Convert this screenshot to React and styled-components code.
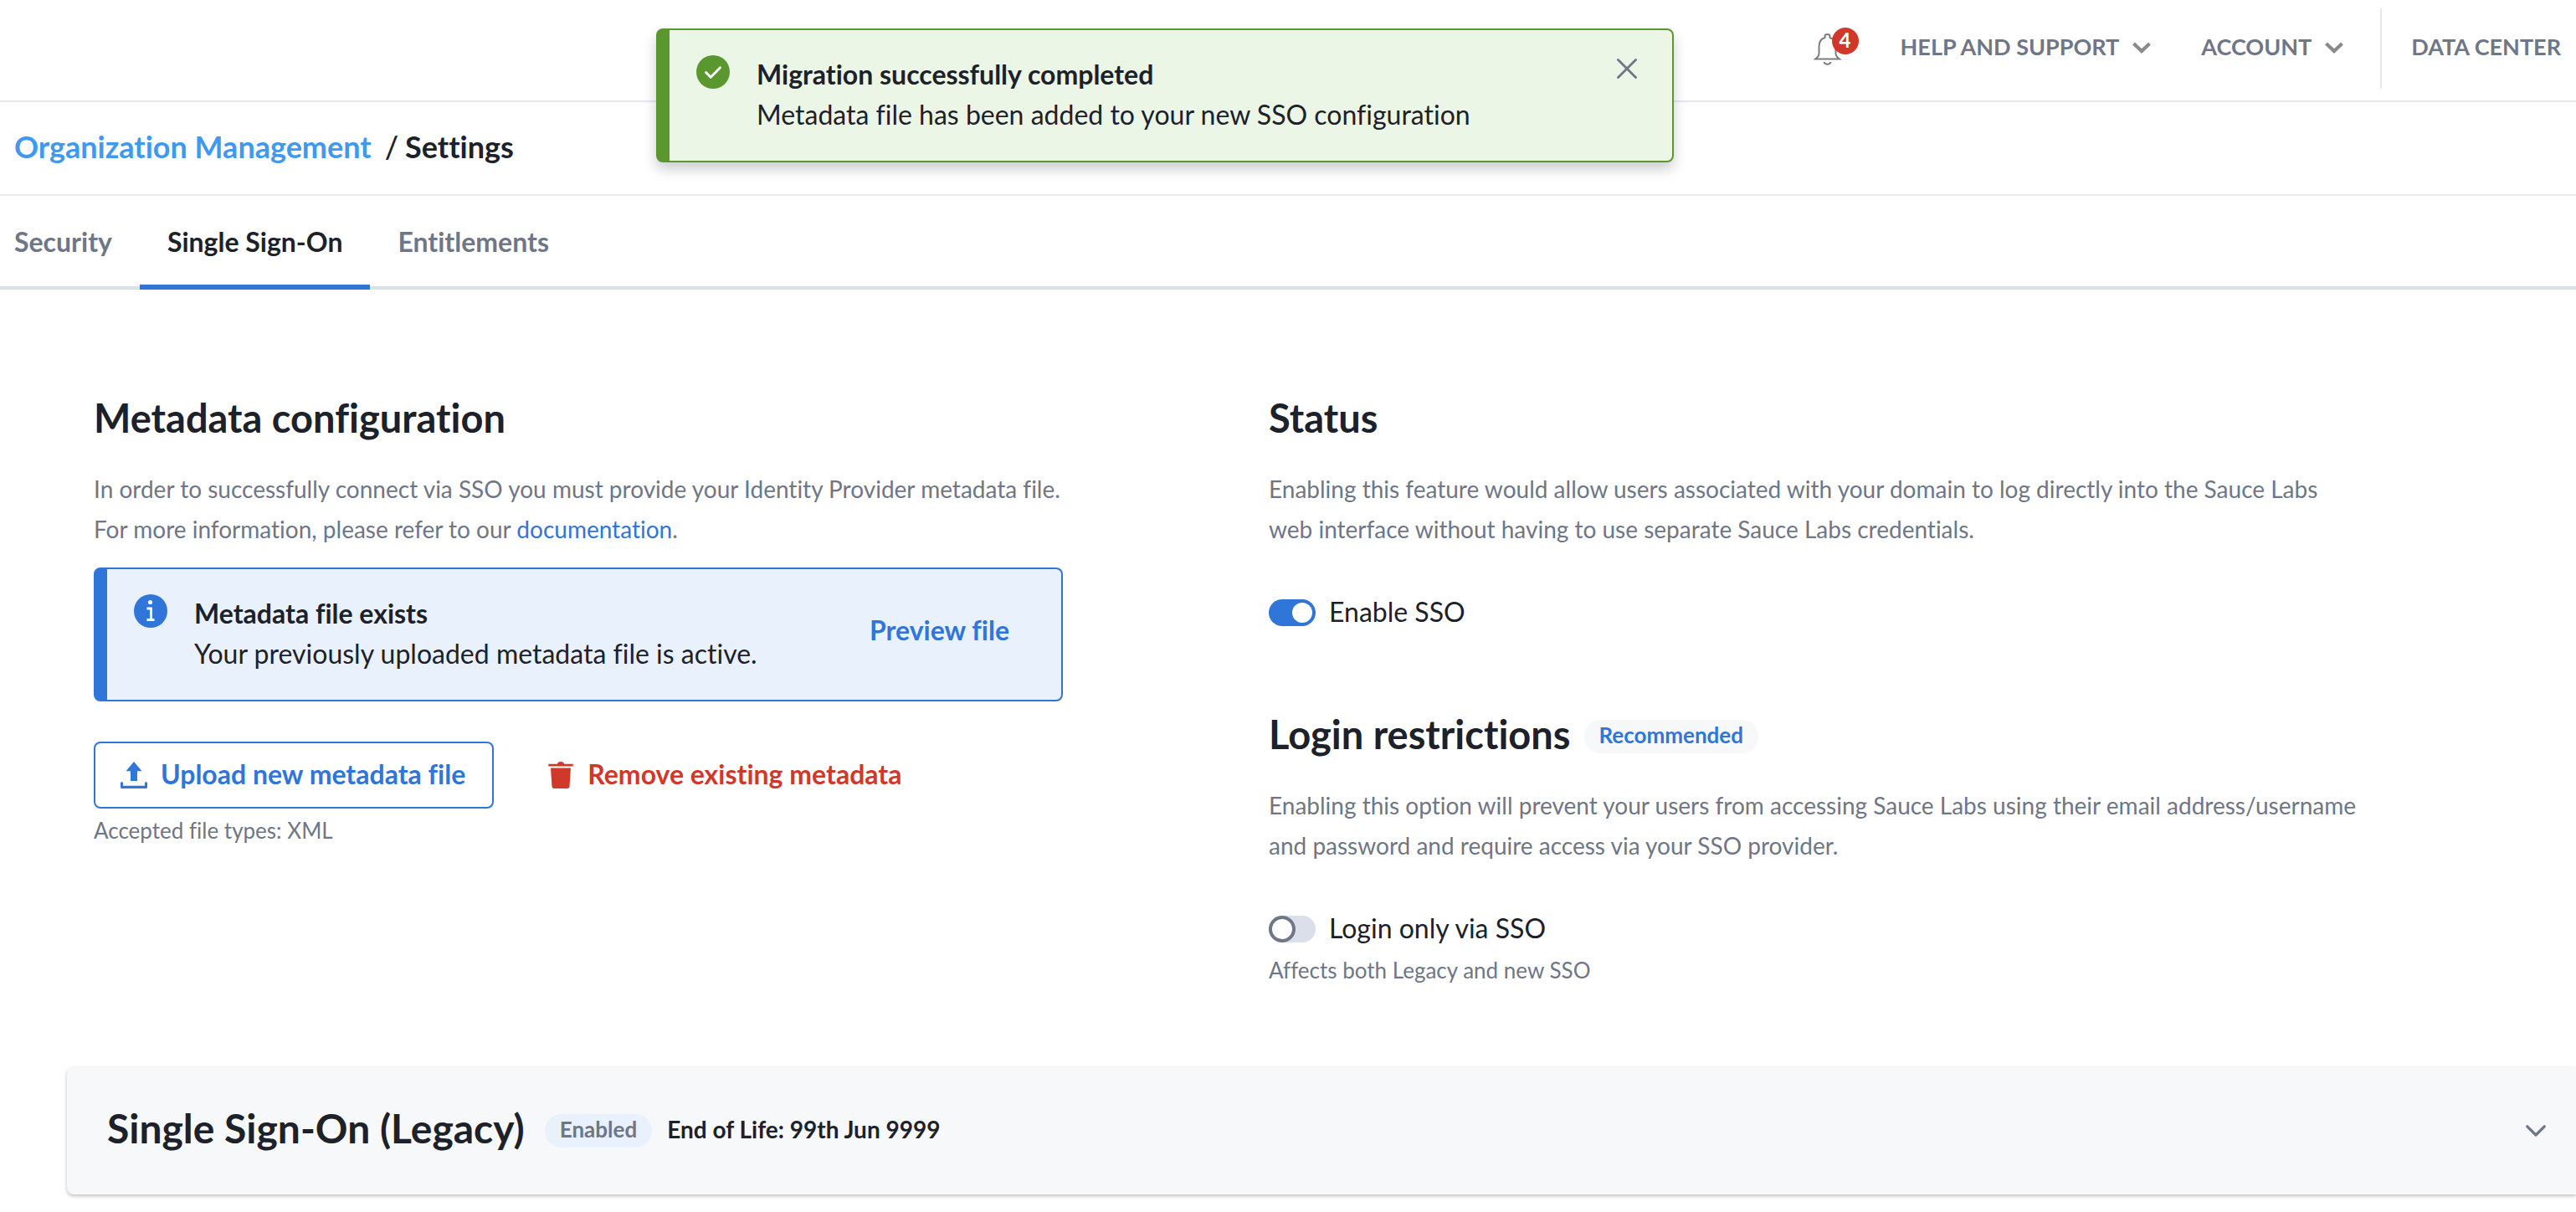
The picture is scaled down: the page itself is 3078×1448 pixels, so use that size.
import React, { useState } from 'react';
import styled, { createGlobalStyle, css } from 'styled-components';

const color = {
  ink: '#1d2129',
  muted: '#6f7685',
  blue: '#3075d8',
  blueSoft: '#e9f1fd',
  link: '#4099ec',
  green: '#5a982f',
  greenSoft: '#ebf6e6',
  red: '#d0382a',
  panel: '#f7f8fa',
  track: '#dbdfe9',
};

const Global = createGlobalStyle`
  *, *::before, *::after { box-sizing: border-box; }
  body {
    margin: 0;
    background: #fff;
    color: ${color.ink};
    font-family: Lato, "Liberation Sans", sans-serif;
    font-size: 32px;
    font-variant-ligatures: none;
    line-height: 48px;
  }
`;

const resetButton = css`
  margin: 0;
  padding: 0;
  border: 0;
  background: none;
  font: inherit;
  font-variant-ligatures: none;
  color: inherit;
  cursor: pointer;
`;

const Icon = styled.svg`
  display: block;
  flex: none;
`;

/* ---------- top bar ---------- */

const TopBar = styled.header`
  display: flex;
  justify-content: flex-end;
  align-items: center;
  padding: 10px 18px 14px 0;
  border-bottom: 2px solid #e5e9ee;
`;

const BellButton = styled.button`
  ${resetButton}
  position: relative;
  padding: 2px 20px 0 0;
  margin-right: 50px;
  color: #7d7d7d;
`;

const Count = styled.span`
  position: absolute;
  top: -4px;
  right: 0;
  width: 32px;
  height: 32px;
  border-radius: 50%;
  background: ${color.red};
  color: #fff;
  font-size: 24px;
  font-weight: 700;
  line-height: 30px;
  text-align: center;
`;

const TopItem = styled.button`
  ${resetButton}
  display: flex;
  align-items: center;
  gap: 16px;
  padding-bottom: 4px;
  margin-right: ${(p) => p.$gap}px;
  font-size: 27px;
  font-weight: 700;
  color: ${color.muted};

  svg {
    margin-top: 2px;
    color: #8a8a8a;
  }
`;

const TopDivider = styled.span`
  width: 2px;
  height: 96px;
  margin-right: 35px;
  background: #e8e8ea;
`;

/* ---------- breadcrumb and tabs ---------- */

const Breadcrumb = styled.nav`
  display: flex;
  gap: 8px;
  padding: 31px 17px 35px;
  border-bottom: 2px solid #ebebeb;
  font-size: 36px;
  font-weight: 700;
  line-height: 44px;

  a {
    margin-right: 8px;
    color: ${color.link};
    text-decoration: none;
  }
`;

const Slash = styled.span`
  font-weight: 500;
`;

const Tabs = styled.nav`
  display: flex;
  box-shadow: inset 0 -4px 0 #dbe0e8;
`;

const Tab = styled.button`
  ${resetButton}
  padding: 31px 33px 27px;
  border-bottom: 6px solid ${(p) => (p.$active ? color.blue : 'transparent')};
  font-weight: 700;
  color: ${(p) => (p.$active ? color.ink : color.muted)};

  &:first-child {
    padding-left: 17px;
  }
`;

/* ---------- alerts ---------- */

const AlertBox = styled.div`
  display: flex;
  gap: 32px;
  padding: 29px 42px 31px 32px;
  border: 2px solid ${(p) => p.$tone};
  border-left-width: 16px;
  border-radius: 8px;
  background: ${(p) => p.$fill};
`;

const Toast = styled(AlertBox)`
  position: absolute;
  top: 34px;
  left: 784px;
  width: 1216px;
  box-shadow: 0 8px 16px rgba(0, 0, 0, 0.2);
`;

const InlineAlert = styled(AlertBox)`
  max-width: 1158px;
  margin-top: 22px;
  padding-right: 62px;
`;

const AlertIcon = styled(Icon)`
  margin-top: 1px;
`;

const AlertText = styled.div`
  flex: 1;
`;

const AlertTitle = styled.div`
  font-weight: 700;
`;

const CloseButton = styled.button`
  ${resetButton}
  align-self: flex-start;
  padding-top: 5px;
  color: ${color.muted};
`;

const TextButton = styled.button`
  ${resetButton}
  padding-bottom: 8px;
  font-weight: 700;
  color: ${color.blue};
`;

/* ---------- settings ---------- */

const Settings = styled.main`
  display: grid;
  grid-template-columns: 1fr 1fr;
  padding: 123px 158px 96px 112px;
`;

const Section = styled.section`
  & + & {
    margin-top: 92px;
  }
`;

const HeadingRow = styled.div`
  display: flex;
  align-items: center;
  gap: 16px;
  margin-bottom: 31px;
`;

const Heading = styled.h2`
  margin: 0;
  font-size: 47px;
  font-weight: 700;
  line-height: 60px;
`;

const Copy = styled.p`
  max-width: 1312px;
  margin: 0;
  font-size: 28px;
  color: ${color.muted};

  a {
    color: ${color.blue};
    text-decoration: none;
  }
`;

const Hint = styled.p`
  margin: 6px 0 0;
  font-size: 26px;
  line-height: 40px;
  color: ${color.muted};
`;

const Pill = styled.span`
  padding: 0 18px 4px;
  border-radius: 20px;
  background: ${(p) => p.$fill};
  color: ${(p) => p.$ink};
  font-size: 26px;
  font-weight: 700;
  line-height: 36px;

  ${Heading} + & {
    margin-top: 6px;
  }
`;

const Actions = styled.div`
  display: flex;
  gap: 32px;
  margin-top: 48px;
`;

const ActionButton = styled.button`
  ${resetButton}
  display: flex;
  align-items: center;
  gap: 16px;
  height: 80px;
  padding: 0 32px 0 30px;
  border: 2px solid ${(p) => (p.$outlined ? p.$tone : 'transparent')};
  border-radius: 8px;
  font-weight: 700;
  color: ${(p) => p.$tone};

  span {
    padding-bottom: 2px;
  }
`;

const SwitchLabel = styled.label`
  display: flex;
  gap: 16px;
  margin-top: 51px;
  cursor: pointer;
`;

const Switch = styled.input`
  appearance: none;
  display: flex;
  flex: none;
  width: 56px;
  height: 32px;
  margin: 9px 0 0;
  border-radius: 16px;
  background: ${color.track};

  &::before {
    content: '';
    width: 32px;
    height: 32px;
    border: 4px solid ${color.muted};
    border-radius: 50%;
    background: #fff;
  }

  &:checked {
    justify-content: flex-end;
    align-items: center;
    padding-right: 4px;
    background: ${color.blue};
  }

  &:checked::before {
    width: 24px;
    height: 24px;
    border: 0;
  }
`;

/* ---------- legacy panel ---------- */

const LegacyArea = styled.section`
  padding: 0 0 22px 80px;
`;

const LegacyPanel = styled.button`
  ${resetButton}
  display: flex;
  align-items: center;
  width: 100%;
  height: 152px;
  padding: 0 36px 0 48px;
  border-radius: 8px 0 0 8px;
  background: ${color.panel};
  box-shadow: 0 2px 4px rgba(0, 0, 0, 0.25);
  text-align: left;
`;

const LegacyTitle = styled.span`
  padding-bottom: 6px;
  margin-right: 24px;
  font-size: 48px;
  font-weight: 700;
  line-height: 60px;
`;

const EndOfLife = styled.span`
  flex: 1;
  padding-bottom: 4px;
  margin-left: 18px;
  font-size: 28px;
  font-weight: 700;
`;

const PanelChevron = styled(Icon)`
  color: ${color.muted};
`;

/* ---------- drawings ---------- */

const Bell = () => (
  <Icon width="34" height="40" viewBox="0 0 34 40" fill="none" stroke="currentColor" strokeWidth="2">
    <path d="M2 31.5 C5.500 29 6.500 27.500 6.500 25 V17 C6.500 10.500 9.500 7 13.500 6 V4 C13.500 1.300 19.500 1.300 19.500 4 V6 C23.500 7 26.500 10.500 26.500 17 V25 C26.500 27.500 27.500 29 31 31.500 Z" />
    <path d="M12.500 35 C13.500 38.500 19.500 38.500 20.500 35" />
  </Icon>
);

const SmallChevron = () => (
  <Icon width="22" height="14" viewBox="0 0 22 14" fill="none" stroke="currentColor" strokeWidth="4.200">
    <path d="M1.500 2 L11 11 L20.500 2" />
  </Icon>
);

const CheckCircle = () => (
  <AlertIcon width="40" height="40" viewBox="0 0 40 40">
    <circle cx="20" cy="20" r="20" fill={color.green} />
    <path d="M11.500 20.500 L17.200 26.200 L28.500 14.800" fill="none" stroke="#fff" strokeWidth="3" strokeLinecap="round" strokeLinejoin="round" />
  </AlertIcon>
);

const InfoCircle = () => (
  <AlertIcon width="40" height="40" viewBox="0 0 40 40">
    <circle cx="20" cy="20" r="20" fill={color.blue} />
    <circle cx="19.500" cy="9.500" r="2.600" fill="#fff" />
    <path d="M15.500 17 H20.500 V30.500 M15.500 30.500 H24.500" fill="none" stroke="#fff" strokeWidth="2.800" />
  </AlertIcon>
);

const Cross = () => (
  <Icon width="24" height="24" viewBox="0 0 24 24" fill="none" stroke="currentColor" strokeWidth="2.800" strokeLinecap="round">
    <path d="M1.500 1.500 L22.500 22.500 M22.500 1.500 L1.500 22.500" />
  </Icon>
);

const UploadIcon = () => (
  <Icon width="32" height="32" viewBox="0 0 32 32" fill="currentColor">
    <path d="M16 0 L25.500 11.300 H20 V23 H12 V11.300 H6.500 Z" />
    <path d="M0 25.500 Q0 24.300 1.500 24.300 Q3 24.300 3 25.500 V28.700 H29 V25.500 Q29 24.300 30.500 24.300 Q32 24.300 32 25.500 V30.500 Q32 32 30.500 32 H1.500 Q0 32 0 30.500 Z" />
  </Icon>
);

const TrashIcon = () => (
  <Icon width="32" height="32" viewBox="0 0 32 32" fill="currentColor">
    <path d="M1.300 2.800 H12 Q12.500 0 16 0 Q19.500 0 20 2.800 H30.700 V5.500 H1.300 Z" />
    <path d="M4 7.500 H28 L26.500 29.500 Q26.300 32 24 32 H8 Q5.700 32 5.500 29.500 Z" />
  </Icon>
);

const TABS = ['Security', 'Single Sign-On', 'Entitlements'];

export default function App() {
  const [tab, setTab] = useState('Single Sign-On');
  const [enabled, setEnabled] = useState(true);
  const [onlySso, setOnlySso] = useState(false);
  const [toast, setToast] = useState(true);

  return (
    <>
      <Global />
      <TopBar>
        <BellButton type="button" aria-label="Notifications">
          <Bell />
          <Count>4</Count>
        </BellButton>
        <TopItem type="button" $gap={60}>
          HELP AND SUPPORT
          <SmallChevron />
        </TopItem>
        <TopItem type="button" $gap={44}>
          ACCOUNT
          <SmallChevron />
        </TopItem>
        <TopDivider />
        <TopItem type="button" $gap={0}>DATA CENTER</TopItem>
      </TopBar>

      <Breadcrumb aria-label="Breadcrumb">
        <a href="#organization">Organization Management</a>
        <Slash>/</Slash>
        <span>Settings</span>
      </Breadcrumb>

      <Tabs aria-label="Settings">
        {TABS.map((name) => (
          <Tab key={name} type="button" $active={name === tab} onClick={() => setTab(name)}>
            {name}
          </Tab>
        ))}
      </Tabs>

      <Settings>
        <div>
          <Section>
            <HeadingRow>
              <Heading>Metadata configuration</Heading>
            </HeadingRow>
            <Copy>
              In order to successfully connect via SSO you must provide your Identity Provider metadata file.
              <br />
              For more information, please refer to our <a href="#documentation">documentation</a>.
            </Copy>
            <InlineAlert $tone={color.blue} $fill={color.blueSoft}>
              <InfoCircle />
              <AlertText>
                <AlertTitle>Metadata file exists</AlertTitle>
                <div>Your previously uploaded metadata file is active.</div>
              </AlertText>
              <TextButton type="button">Preview file</TextButton>
            </InlineAlert>
            <Actions>
              <ActionButton type="button" $outlined $tone={color.blue}>
                <UploadIcon />
                <span>Upload new metadata file</span>
              </ActionButton>
              <ActionButton type="button" $tone={color.red}>
                <TrashIcon />
                <span>Remove existing metadata</span>
              </ActionButton>
            </Actions>
            <Hint>Accepted file types: XML</Hint>
          </Section>
        </div>

        <div>
          <Section>
            <HeadingRow>
              <Heading>Status</Heading>
            </HeadingRow>
            <Copy>
              Enabling this feature would allow users associated with your domain to log directly into the Sauce Labs
              web interface without having to use separate Sauce Labs credentials.
            </Copy>
            <SwitchLabel>
              <Switch type="checkbox" checked={enabled} onChange={(e) => setEnabled(e.target.checked)} />
              <span>Enable SSO</span>
            </SwitchLabel>
          </Section>
          <Section>
            <HeadingRow>
              <Heading>Login restrictions</Heading>
              <Pill $fill={color.panel} $ink={color.blue}>Recommended</Pill>
            </HeadingRow>
            <Copy>
              Enabling this option will prevent your users from accessing Sauce Labs using their email
              address/username and password and require access via your SSO provider.
            </Copy>
            <SwitchLabel>
              <Switch type="checkbox" checked={onlySso} onChange={(e) => setOnlySso(e.target.checked)} />
              <span>Login only via SSO</span>
            </SwitchLabel>
            <Hint>Affects both Legacy and new SSO</Hint>
          </Section>
        </div>
      </Settings>

      <LegacyArea>
        <LegacyPanel type="button" aria-expanded="false">
          <LegacyTitle>Single Sign-On (Legacy)</LegacyTitle>
          <Pill $fill={color.blueSoft} $ink={color.muted}>Enabled</Pill>
          <EndOfLife>End of Life: 99th Jun 9999</EndOfLife>
          <PanelChevron width="24" height="14" viewBox="0 0 24 14" fill="none" stroke="currentColor" strokeWidth="3.200" strokeLinecap="round" strokeLinejoin="round">
            <path d="M1.800 1.800 L12 12 L22.200 1.800" />
          </PanelChevron>
        </LegacyPanel>
      </LegacyArea>

      {toast && (
        <Toast role="status" $tone={color.green} $fill={color.greenSoft}>
          <CheckCircle />
          <AlertText>
            <AlertTitle>Migration successfully completed</AlertTitle>
            <div>Metadata file has been added to your new SSO configuration</div>
          </AlertText>
          <CloseButton type="button" aria-label="Dismiss" onClick={() => setToast(false)}>
            <Cross />
          </CloseButton>
        </Toast>
      )}
    </>
  );
}
